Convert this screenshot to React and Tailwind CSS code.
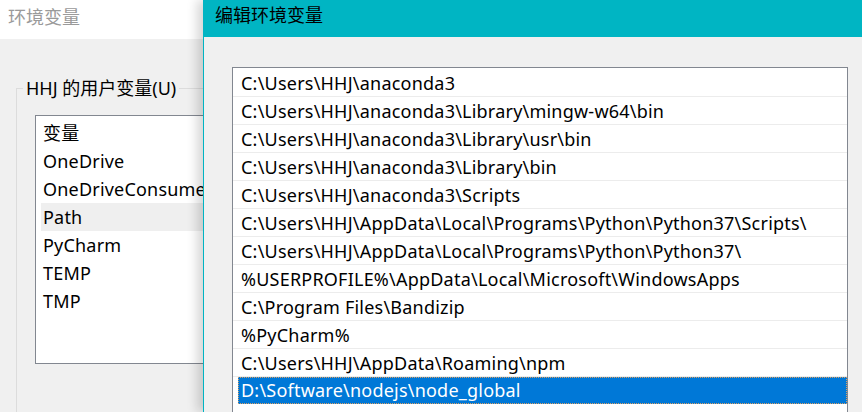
import React from "react";

const userVars = ["变量", "OneDrive", "OneDriveConsumer", "Path", "PyCharm", "TEMP", "TMP"];

const paths = [
  "C:\\Users\\HHJ\\anaconda3",
  "C:\\Users\\HHJ\\anaconda3\\Library\\mingw-w64\\bin",
  "C:\\Users\\HHJ\\anaconda3\\Library\\usr\\bin",
  "C:\\Users\\HHJ\\anaconda3\\Library\\bin",
  "C:\\Users\\HHJ\\anaconda3\\Scripts",
  "C:\\Users\\HHJ\\AppData\\Local\\Programs\\Python\\Python37\\Scripts\\",
  "C:\\Users\\HHJ\\AppData\\Local\\Programs\\Python\\Python37\\",
  "%USERPROFILE%\\AppData\\Local\\Microsoft\\WindowsApps",
  "C:\\Program Files\\Bandizip",
  "%PyCharm%",
  "C:\\Users\\HHJ\\AppData\\Roaming\\npm",
  "D:\\Software\\nodejs\\node_global",
];

const font = { fontFamily: '"Noto Sans", "Noto Sans CJK SC", sans-serif' };

export default function App() {
  return (
    <div
      className="relative w-[862px] h-[412px] overflow-hidden bg-[#f0f0f0] text-[18px] text-black"
      style={font}
    >
      {/* back window */}
      <div className="flex flex-col h-full">
        <div className="h-[39px] shrink-0 bg-white px-2 leading-[34px] text-[#9a9a9a]">环境变量</div>
        <div className="flex-1 pl-4 pt-[49px]">
          <div className="relative h-[400px] border-l border-t border-[#dcdcdc]">
            <span className="absolute -top-[13px] left-[6px] bg-[#f0f0f0] px-[3px] leading-[24px] whitespace-nowrap">
              HHJ 的用户变量(U)
            </span>
            <div className="ml-[18px] mt-[26px] w-[300px] h-[249px] border border-[#828790] bg-white pt-[3px] pl-[5px] tracking-[0.2px]">
              {userVars.map((v) => (
                <div
                  key={v}
                  className={`h-[28px] leading-[28px] pl-[2px] whitespace-nowrap ${
                    v === "Path" ? "bg-[#efefef]" : ""
                  }`}
                >
                  {v}
                </div>
              ))}
            </div>
          </div>
        </div>
      </div>

      {/* front window */}
      <div className="absolute left-[203px] top-0 w-[700px] h-full flex flex-col border-l border-[#00b4c3] bg-[#f0f0f0] shadow-[-6px_0_10px_rgba(0,0,0,0.16)]">
        <div className="h-[37px] shrink-0 bg-[#00b5c3] pl-[11px] leading-[30px]">编辑环境变量</div>
        <div className="shrink-0 pl-[28px] pt-[30px]">
          <div className="w-[616px] h-[400px] border border-[#828790] bg-white pt-px tracking-[0.22px]">
            {paths.map((p, i) =>
              i === paths.length - 1 ? (
                <div key={p} className="h-[28px] pl-[5px]">
                  <div className="h-[27px] leading-[25px] pl-[2px] bg-[#0078d7] text-white border border-dotted border-[#d9a066] whitespace-nowrap">
                    {p}
                  </div>
                </div>
              ) : (
                <div
                  key={p}
                  className="h-[28px] leading-[28px] pl-[8px] border-b border-[#ececec] whitespace-nowrap"
                >
                  {p}
                </div>
              )
            )}
          </div>
        </div>
      </div>
    </div>
  );
}
